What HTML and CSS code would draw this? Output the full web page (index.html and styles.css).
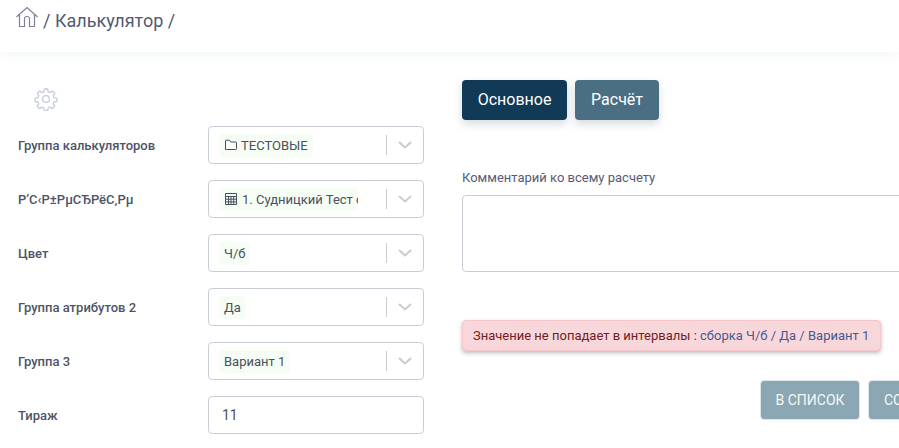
FILE: index.html
```html
<!DOCTYPE html>
<html lang="ru">
<head>
<meta charset="utf-8">
<title>Калькулятор</title>
<link rel="stylesheet" href="styles.css">
</head>
<body>
<header class="topbar">
  <svg class="home" viewBox="0 0 24 22" width="24" height="22" fill="none" stroke="#7d7f97" stroke-width="1.2"><path d="M1.5 11 12 1.5 22.5 11"/><path d="M4.5 8.5V20.5H9.5V12.5Q9.5 10.5 12 10.5T14.5 12.5V20.5H19.5V8.5"/></svg>
  <span class="crumbs">/ Калькулятор /</span>
</header>
<main class="layout">
  <section class="left">
    <svg class="gear" viewBox="0 0 24 24" width="24" height="24" fill="none" stroke="#c6cbdd" stroke-width="1.3" stroke-linejoin="round"><circle cx="12" cy="12" r="3.4"/><path d="M10.3 2h3.4l.5 2.8 1.9.8 2.3-1.6 2.4 2.4-1.6 2.3.8 1.9 2.8.5v3.4l-2.8.5-.8 1.9 1.6 2.3-2.4 2.4-2.3-1.6-1.9.8-.5 2.8h-3.4l-.5-2.8-1.9-.8-2.3 1.6-2.4-2.4 1.6-2.3-.8-1.9-2.8-.5v-3.4l2.8-.5.8-1.9-1.6-2.3 2.4-2.4 2.3 1.6 1.9-.8z"/></svg>
    <div class="row">
      <label class="lbl">Группа калькуляторов</label>
      <div class="select">
        <div class="value"><span class="chip"><svg class="ic" viewBox="0 0 14 12" width="14" height="12" fill="none" stroke="#4a4f5c" stroke-width="1"><path d="M1.5 10.5V2q0-.8.8-.8h3L6.700 3h5q.8 0 .8.8v6q0 .7-.8.7H2.200q-.7 0-.7-.7z"/></svg>ТЕСТОВЫЕ</span></div>
        <span class="sep"></span><svg class="chev" viewBox="0 0 14 8" width="14" height="8" fill="none" stroke="#cccccc" stroke-width="2"><path d="M1 1l6 5.500 6-5.500"/></svg>
      </div>
    </div>
    <div class="row">
      <label class="lbl">Р’С‹Р±РµСЂРёС‚Рµ</label>
      <div class="select">
        <div class="value"><span class="chip clip"><svg class="ic ic-grid" viewBox="0 0 14 14" width="14" height="14" fill="none" stroke="#4a4f5c" stroke-width="1"><path d="M1.500 1.500h11v11h-11zM1.500 4.500h11M1.500 7.200h11M1.500 9.900h11M4.500 4.500v8M7 4.500v8M9.700 4.500v8"/></svg>1. Судницкий Тест сборка</span></div>
        <span class="sep"></span><svg class="chev" viewBox="0 0 14 8" width="14" height="8" fill="none" stroke="#cccccc" stroke-width="2"><path d="M1 1l6 5.500 6-5.500"/></svg>
      </div>
    </div>
    <div class="row">
      <label class="lbl">Цвет</label>
      <div class="select">
        <div class="value"><span class="chip">Ч/б</span></div>
        <span class="sep"></span><svg class="chev" viewBox="0 0 14 8" width="14" height="8" fill="none" stroke="#cccccc" stroke-width="2"><path d="M1 1l6 5.500 6-5.500"/></svg>
      </div>
    </div>
    <div class="row">
      <label class="lbl">Группа атрибутов 2</label>
      <div class="select">
        <div class="value"><span class="chip">Да</span></div>
        <span class="sep"></span><svg class="chev" viewBox="0 0 14 8" width="14" height="8" fill="none" stroke="#cccccc" stroke-width="2"><path d="M1 1l6 5.500 6-5.500"/></svg>
      </div>
    </div>
    <div class="row">
      <label class="lbl">Группа 3</label>
      <div class="select">
        <div class="value"><span class="chip">Вариант 1</span></div>
        <span class="sep"></span><svg class="chev" viewBox="0 0 14 8" width="14" height="8" fill="none" stroke="#cccccc" stroke-width="2"><path d="M1 1l6 5.500 6-5.500"/></svg>
      </div>
    </div>
    <div class="row">
      <label class="lbl">Тираж</label>
      <div class="input">11</div>
    </div>
  </section>
  <section class="right">
    <div class="tabs">
      <button class="tab tab-main">Основное</button>
      <button class="tab tab-calc">Расчёт</button>
    </div>
    <div class="comment-label">Комментарий ко всему расчету</div>
    <div class="textarea"></div>
    <div class="alert">Значение не попадает в интервалы : <span class="alert-link">сборка Ч/б / Да / Вариант 1</span></div>
    <div class="actions">
      <button class="action action-list">В СПИСОК</button>
      <button class="action">СОХРАНИТЬ</button>
    </div>
  </section>
</main>
</body>
</html>
```
FILE: styles.css
```css
* { box-sizing: border-box; }
html, body { margin: 0; height: 100%; overflow: hidden; background: #fff; }
body { width: 899px; height: 448px; font-family: Roboto, "Liberation Sans", sans-serif; color: #4a5166; }
.topbar { height: 52px; display: flex; align-items: flex-start; padding: 6px 0 0 15px; gap: 4px; background: #fff; box-shadow: 0 3px 10px rgba(90, 110, 110, .07); }
.home { flex: none; }
.crumbs { font-size: 18px; line-height: 30px; color: #4f5a74; }
.layout { display: flex; align-items: flex-start; }
.left { width: 424px; flex: none; padding: 35px 0 0 18px; }
.gear { display: block; margin: 0 0 15px 16px; }
.row { display: flex; align-items: center; height: 38px; margin-bottom: 16px; }
.lbl { width: 190px; flex: none; font-size: 13px; font-weight: 500; color: #4d5468; }
.select, .input { width: 216px; height: 38px; flex: none; border: 1px solid #c9ccd4; border-radius: 4px; background: #fff; display: flex; align-items: center; }
.value { flex: 1; min-width: 0; padding-left: 10px; display: flex; }
.chip { display: inline-flex; align-items: center; height: 23px; padding: 0 5px; background: #f5fdf5; border-radius: 3px; font-size: 13px; color: #4a5060; white-space: nowrap; }
.clip { width: 139px; overflow: hidden; }
.ic { flex: none; margin-right: 3px; }
.ic-grid { margin-right: 4px; }
.sep { width: 1px; height: 20px; background: #cccccc; flex: none; }
.chev { flex: none; margin: 0 11px; }
.input { padding-left: 13px; font-size: 14px; color: #4a5060; }
.right { flex: none; width: 520px; padding: 28px 0 0 38px; }
.tabs { display: flex; gap: 8px; }
.tab { height: 40px; border: 0; border-radius: 4px; padding: 0; font: 400 16px/40px Roboto, sans-serif; color: #fff; background: #4a6f83; box-shadow: 0 4px 8px rgba(50, 70, 90, .2); }
.tab-main { width: 105px; background: #113a56; }
.tab-calc { width: 84px; }
.comment-label { margin-top: 50px; font-size: 13px; line-height: 16px; color: #555c72; }
.textarea { margin-top: 9px; width: 520px; height: 77px; border: 1px solid #c9ccd4; border-radius: 4px; }
.alert { margin-top: 48px; width: 419px; height: 31px; padding-left: 10px; background: #f8d7da; border: 1px solid #f5c6cb; border-radius: 4px; font-size: 13px; line-height: 29px; color: #721c24; white-space: nowrap; box-shadow: 0 2px 4px rgba(60, 60, 70, .35); }
.alert-link { color: #4a5890; }
.actions { margin: 29px 0 0 298px; display: flex; gap: 8px; width: 300px; }
.action { height: 40px; flex: none; padding: 0 15px; border: 1px solid #dfe6ea; border-radius: 4px; background: #8ca7b4; color: #f4f7f8; font: 400 14px/38px Roboto, sans-serif; white-space: nowrap; }
.action-list { width: 100px; padding: 0; }
```
